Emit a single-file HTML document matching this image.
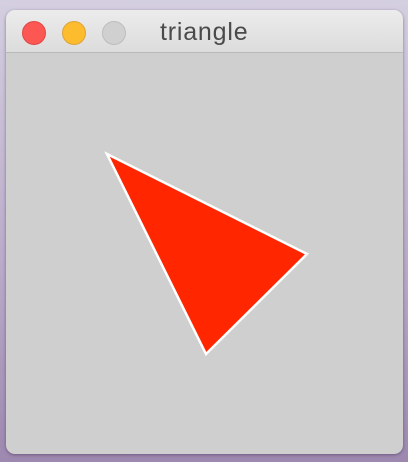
<!DOCTYPE html>
<html><head><style>
html,body{margin:0;padding:0;}
body{width:408px;height:462px;overflow:hidden;background:linear-gradient(#d4cfe0,#b8a9c8 60%,#9d88b0);position:relative;font-family:"Liberation Sans",sans-serif;}
.win{position:absolute;left:6px;top:10px;width:397px;height:444px;border-radius:9px;background:#cfcfcf;overflow:hidden;box-shadow:0 1px 3px rgba(60,40,80,.5);}
.title{height:42px;background:linear-gradient(#ececec,#dcdcdc);border-bottom:1px solid #b9b9b9;position:relative;}
.dot{position:absolute;top:11px;width:24px;height:24px;border-radius:50%;box-sizing:border-box;}
.t{position:absolute;left:154px;top:8px;font-size:25px;letter-spacing:0.8px;color:#4a4a4a;}
</style></head><body>
<div class="win">
<div class="title">
<div class="dot" style="left:16px;background:#fc5753;border:1px solid #df4744"></div>
<div class="dot" style="left:56px;background:#fdbc2e;border:1px solid #dea236"></div>
<div class="dot" style="left:96px;background:#d0d0d0;border:1px solid #bdbdbd"></div>
<div class="t">triangle</div>
</div>
</div>
<svg width="408" height="462" style="position:absolute;left:0;top:0">
<polygon points="107,154 307,254 206,354" fill="#ff2600" stroke="#ffffff" stroke-width="2.5"/>
</svg>
</body></html>
